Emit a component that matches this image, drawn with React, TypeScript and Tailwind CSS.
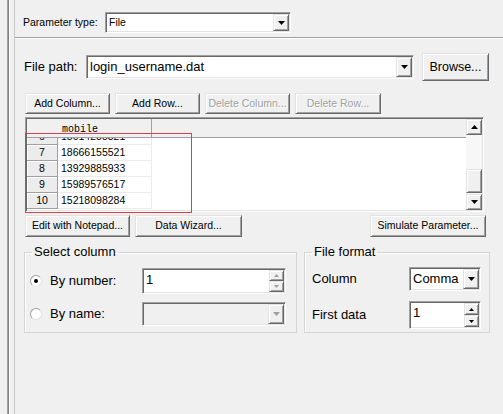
import type { ReactNode } from "react";
import clsx from "clsx";

const raised =
    "bg-[#f0f0f0] border border-t-[#e3e3e3] border-l-[#e3e3e3] border-r-[#696969] border-b-[#696969] shadow-[inset_1px_1px_0_#ffffff,inset_-1px_-1px_0_#a0a0a0]";
const sunken =
    "border border-t-[#a0a0a0] border-l-[#a0a0a0] border-r-white border-b-white shadow-[inset_1px_1px_0_#696969,inset_-1px_-1px_0_#e3e3e3] p-[1px]";

function Btn({ children, className, disabled }: { children: ReactNode; className?: string; disabled?: boolean }) {
    return (
        <div
            className={clsx(
                raised,
                "flex items-center justify-center text-[10.5px] whitespace-nowrap",
                disabled ? "text-[#a0a0a0] [text-shadow:1px_1px_0_#ffffff]" : "text-black",
                className,
            )}
        >
            {children}
        </div>
    );
}

function Arrow({ up, color = "#000" }: { up?: boolean; color?: string }) {
    return (
        <svg width="7" height="4" viewBox="0 0 7 4">
            <path d={up ? "M0 4h7L3.5 0z" : "M0 0h7L3.5 4z"} fill={color} />
        </svg>
    );
}

function SmallArrow({ up, color }: { up?: boolean; color: string }) {
    return (
        <svg width="5" height="3" viewBox="0 0 5 3">
            <path d={up ? "M0 3h5L2.5 0z" : "M0 0h5L2.5 3z"} fill={color} />
        </svg>
    );
}

function Combo({
    value,
    className,
    textClass,
    disabled,
}: {
    value: string;
    className?: string;
    textClass?: string;
    disabled?: boolean;
}) {
    return (
        <div className={clsx(sunken, "flex", disabled ? "bg-[#f0f0f0]" : "bg-white", className)}>
            <div className={clsx("flex-1 flex items-center pl-[2px] truncate", textClass)}>{value}</div>
            <div className={clsx(raised, "w-[16px] flex items-center justify-center")}>
                <Arrow color={disabled ? "#a0a0a0" : "#000"} />
            </div>
        </div>
    );
}

function Spin({ value, className, dim }: { value: string; className?: string; dim?: boolean }) {
    const c = dim ? "#a0a0a0" : "#000";
    return (
        <div className={clsx(sunken, "flex bg-white", className)}>
            <div className="flex-1 pl-[2px] pt-[2px] text-[13px] leading-[15px]">{value}</div>
            <div className="w-[15px] flex flex-col">
                <div className={clsx(raised, "flex-1 flex items-center justify-center")}>
                    <SmallArrow up color={c} />
                </div>
                <div className={clsx(raised, "flex-1 flex items-center justify-center")}>
                    <SmallArrow color={c} />
                </div>
            </div>
        </div>
    );
}

function Radio({ checked }: { checked?: boolean }) {
    return (
        <div className="w-[12px] h-[12px] rounded-full bg-white border border-t-[#a0a0a0] border-l-[#a0a0a0] border-r-[#e3e3e3] border-b-[#e3e3e3] flex items-center justify-center">
            {checked && <div className="w-[4px] h-[4px] rounded-full bg-black" />}
        </div>
    );
}

const rows = [
    { n: "6", v: "15014255321" },
    { n: "7", v: "18666155521" },
    { n: "8", v: "13929885933" },
    { n: "9", v: "15989576517" },
    { n: "10", v: "15218098284" },
];

function Row({ n, v }: { n: string; v: string }) {
    return (
        <div className="flex h-[16px] leading-[15px] text-[10.5px]">
            <div className="w-[31px] bg-[#ececec] border-b border-r border-[#a0a0a0] shadow-[inset_1px_1px_0_#ffffff] text-center">
                {n}
            </div>
            <div className="w-[94px] border-b border-r border-[#ebebeb] pl-[3px]">{v}</div>
        </div>
    );
}

export default function App() {
    return (
        <div className="w-[503px] h-[414px] bg-[#f0f0f0] flex font-['Liberation_Sans',Arial,sans-serif] text-black overflow-hidden">
            <div className="w-[7px]" />
            <div className="w-[1px] bg-[#a0a0a0]" />
            <div className="w-[1px] bg-[#808080]" />
            <div className="w-[1px] bg-white" />
            <div className="w-[4px]" />
            <div className="w-[1px] bg-[#c8c8c8]" />

            <div className="flex-1 flex flex-col">
                <div className="h-[37px] pt-[8px] flex items-center pl-[8px]">
                    <div className="w-[82px] text-[10.5px]">Parameter type:</div>
                    <Combo value="File" className="w-[186px] h-[21px]" textClass="text-[10.5px]" />
                </div>
                <div className="h-[1px] bg-[#a0a0a0]" />
                <div className="h-[1px] bg-white" />

                <div className="mt-[14px] h-[28px] flex items-center pl-[9px]">
                    <div className="w-[62px] text-[13px]">File path:</div>
                    <Combo value="login_username.dat" className="w-[328px] h-[24px]" textClass="text-[13px]" />
                    <Btn className="ml-[8px] w-[67px] h-[28px] !text-[12.5px]">Browse...</Btn>
                </div>

                <div className="mt-[12px] h-[21px] flex gap-[5px] pl-[10px]">
                    <Btn className="w-[85px]">Add Column...</Btn>
                    <Btn className="w-[85px]">Add Row...</Btn>
                    <Btn className="w-[85px]" disabled>
                        Delete Column...
                    </Btn>
                    <Btn className="w-[86px]" disabled>
                        Delete Row...
                    </Btn>
                </div>

                <div className={clsx(sunken, "relative mt-[3px] ml-[10px] w-[459px] h-[95px] flex bg-white")}>
                    <div className="flex-1 flex flex-col overflow-hidden">
                        <div className="h-[19px] flex bg-[#f0f0f0] border-b border-[#a0a0a0]">
                            <div className="w-[31px]" />
                            <div className="w-[94px] border-r border-[#a0a0a0] pl-[4px] pt-[5px] font-['Liberation_Mono',monospace] text-[10px] leading-[12px]">
                                mobile
                            </div>
                        </div>
                        <div className="h-[7px] overflow-hidden">
                            <div className="-mt-[9px]">
                                <Row n={rows[0].n} v={rows[0].v} />
                            </div>
                        </div>
                        {rows.slice(1).map((r) => (
                            <Row key={r.n} n={r.n} v={r.v} />
                        ))}
                    </div>
                    <div className="w-[16px] flex flex-col">
                        <div className={clsx(raised, "h-[16px] flex items-center justify-center")}>
                            <Arrow up />
                        </div>
                        <div className="flex-1 bg-[#f7f7f7] flex flex-col justify-end pb-[1px]">
                            <div className={clsx(raised, "h-[24px]")} />
                        </div>
                        <div className={clsx(raised, "h-[16px] flex items-center justify-center")}>
                            <Arrow />
                        </div>
                    </div>
                    <div className="absolute left-[-1px] top-[15px] w-[167px] h-[80px] border border-[#d9404f]" />
                </div>

                <div className="mt-[3px] h-[22px] flex pl-[10px] pr-[17px]">
                    <Btn className="w-[105px]">Edit with Notepad...</Btn>
                    <Btn className="ml-[5px] w-[107px]">Data Wizard...</Btn>
                    <Btn className="ml-auto w-[116px]">Simulate Parameter...</Btn>
                </div>

                <div className="mt-[7px] flex pl-[9px] gap-[7px] text-[13px]">
                    <fieldset className="w-[273px] border border-[#d5d5d5] shadow-[inset_1px_1px_0_#ffffff]">
                        <legend className="ml-[7px] px-[2px] leading-[16px]">Select column</legend>
                        <div className="pt-[8px] pl-[5px]">
                            <div className="h-[26px] flex items-center">
                                <div className="w-[112px] flex items-center gap-[8px]">
                                    <Radio checked />
                                    <span>By number:</span>
                                </div>
                                <Spin value="1" dim className="w-[144px] h-[26px]" />
                            </div>
                            <div className="mt-[8px] h-[24px] flex items-center">
                                <div className="w-[112px] flex items-center gap-[8px]">
                                    <Radio />
                                    <span>By name:</span>
                                </div>
                                <Combo value="" disabled className="w-[144px] h-[24px]" />
                            </div>
                        </div>
                    </fieldset>
                    <fieldset className="w-[186px] border border-[#d5d5d5] shadow-[inset_1px_1px_0_#ffffff]">
                        <legend className="ml-[7px] px-[2px] leading-[16px]">File format</legend>
                        <div className="pt-[7px] pl-[7px] pb-[3px]">
                            <div className="h-[24px] flex items-center">
                                <div className="w-[97px]">Column</div>
                                <Combo value="Comma" className="w-[72px] h-[24px]" textClass="text-[13px]" />
                            </div>
                            <div className="mt-[10px] h-[28px] flex items-center">
                                <div className="w-[97px]">First data</div>
                                <Spin value="1" className="w-[72px] h-[28px]" />
                            </div>
                        </div>
                    </fieldset>
                </div>
            </div>
        </div>
    );
}
